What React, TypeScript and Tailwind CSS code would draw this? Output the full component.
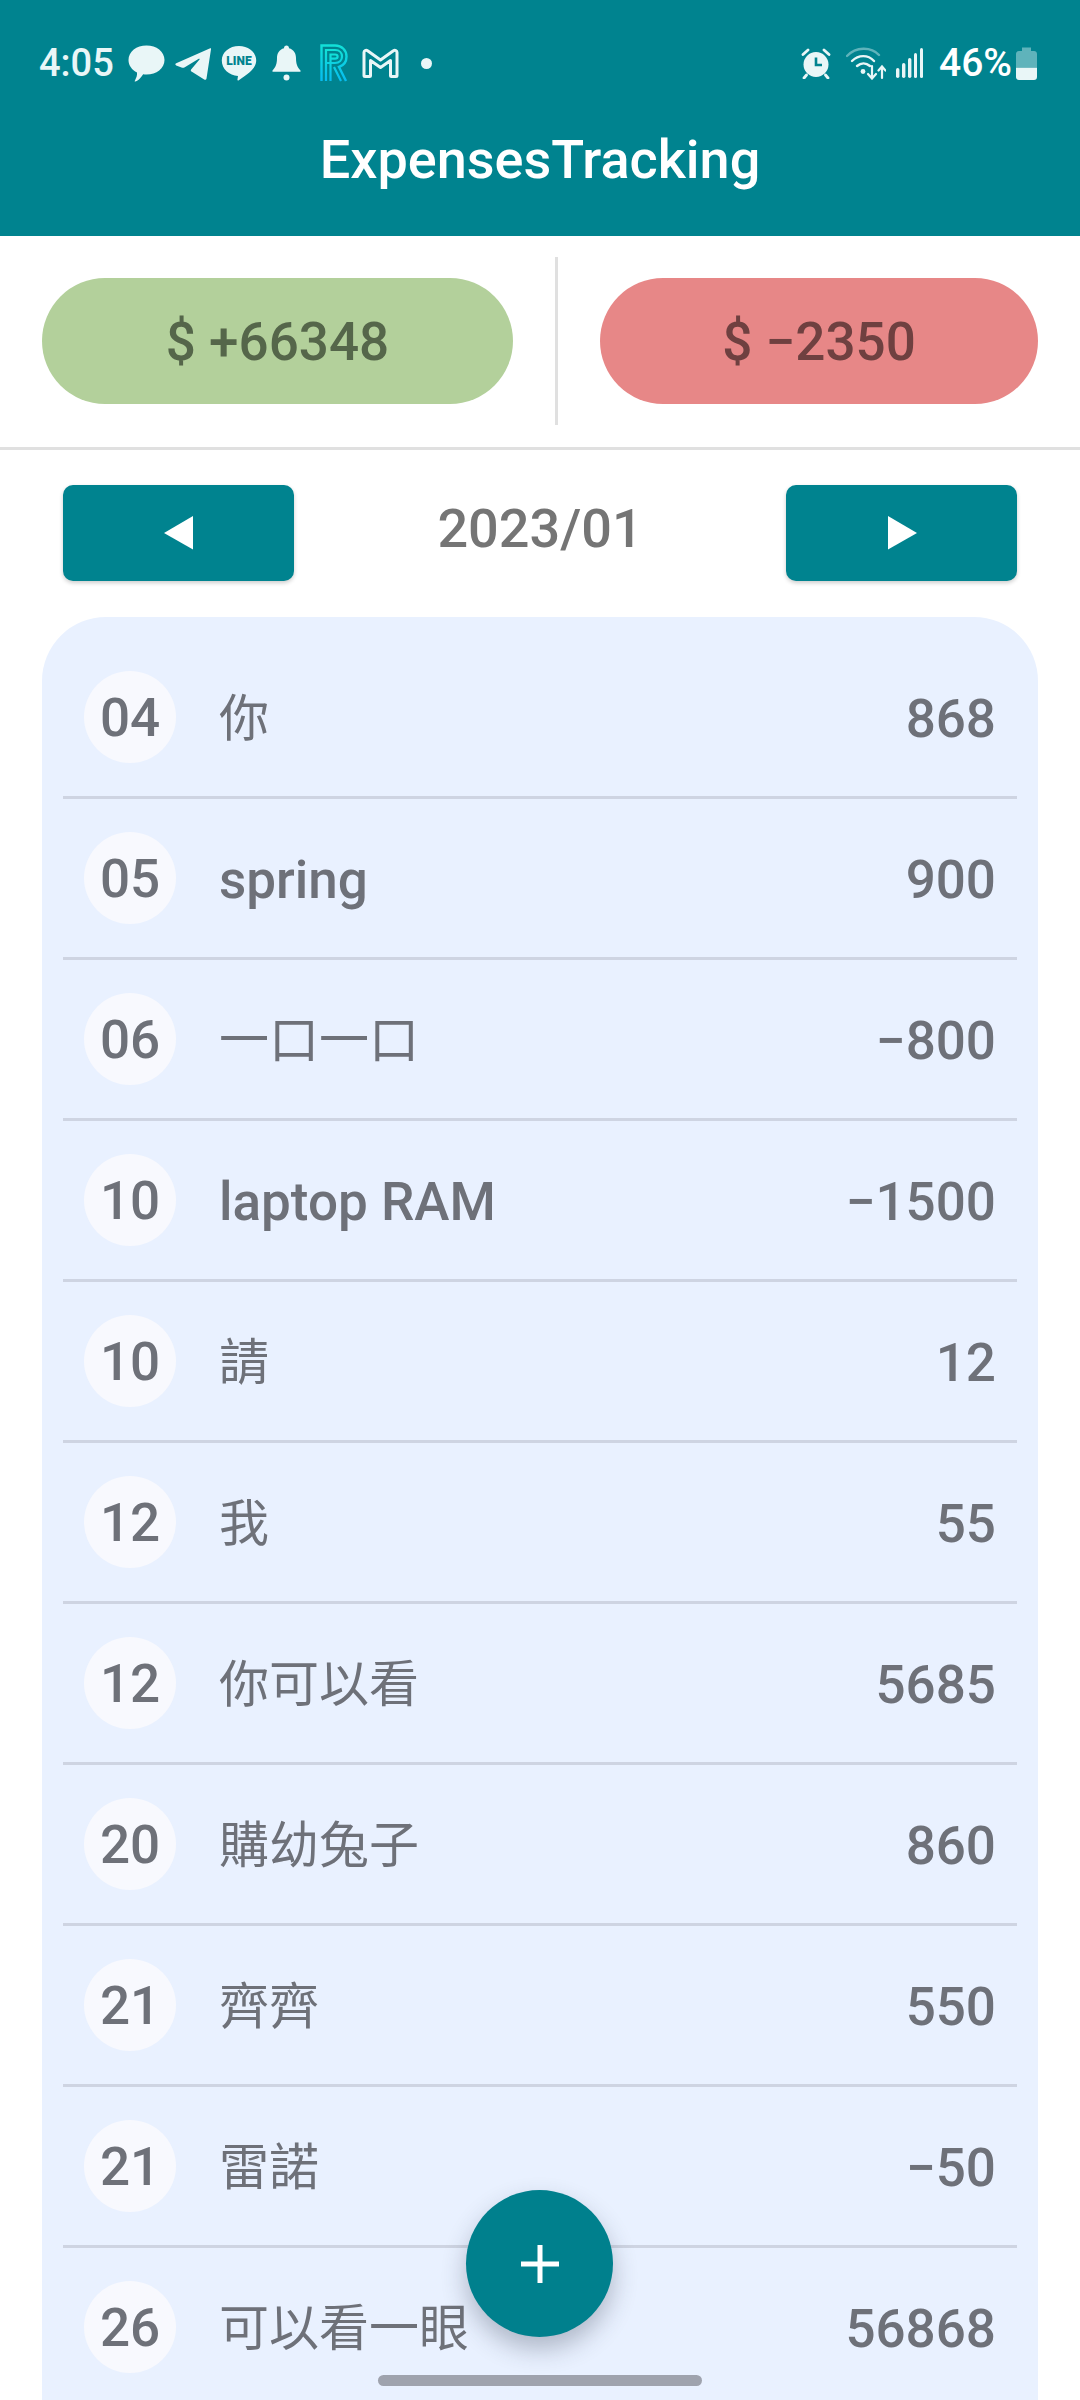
const rows = [
  { day: '04', name: '你', amount: '868' },
  { day: '05', name: 'spring', amount: '900', latin: true },
  { day: '06', name: '一口一口', amount: '−800' },
  { day: '10', name: 'laptop RAM', amount: '−1500', latin: true },
  { day: '10', name: '請', amount: '12' },
  { day: '12', name: '我', amount: '55' },
  { day: '12', name: '你可以看', amount: '5685' },
  { day: '20', name: '購幼兔子', amount: '860' },
  { day: '21', name: '齊齊', amount: '550' },
  { day: '21', name: '雷諾', amount: '−50' },
  { day: '26', name: '可以看一眼', amount: '56868' },
];

function StatusLeft() {
  return (
    <div className="flex items-center">
      <span className="text-[38px] leading-none font-medium text-[#e9f6f7] w-[89px]">4:05</span>
      <svg width="37" height="37" viewBox="0 0 37 37" fill="#e9f6f7">
        <path d="M18.5 0.5C28.5 0.5 36.5 6.6 36.5 15C36.5 23.4 28.5 29.5 18.5 29.5C17.4 29.5 16.3 29.4 15.2 29.2C13.5 32 9.5 36.5 7.2 36.5C6.4 36.5 6.6 35.8 7.2 34.9C8.2 33.2 9.3 30.6 9 27.6C4 25 0.5 20.4 0.5 15C0.5 6.6 8.5 0.5 18.5 0.5Z" />
      </svg>
      <svg className="ml-[10px]" width="36" height="33" viewBox="0 0 36 33" fill="#e9f6f7">
        <path d="M35.2 1.2C35.8 1 36.2 1.5 36 2.2L31.5 31.5C31.3 32.8 30.2 33.2 29.2 32.6L16.5 24.6C15.6 24 15.6 23 16.3 22.3L24.5 12.5C25 11.9 24.4 11.4 23.8 11.8L9.8 20.2C8.8 20.8 7.6 20.9 6.5 20.5L1.2 18.4C0 17.9 0 16.7 1.2 16.2Z" />
      </svg>
      <div className="relative ml-[10px] w-[36px] h-[36px]">
        <svg width="36" height="36" viewBox="0 0 36 36" fill="#e9f6f7">
          <path d="M18 1C27.7 1 35.2 7.2 35.2 15.6C35.2 24 26 29.6 17.8 35.2C16.8 35.9 16.2 35.4 16.5 34.2L17 31C8 30.6 0.8 24 0.8 15.6C0.8 7.2 8.3 1 18 1Z" />
        </svg>
        <span className="absolute left-0 right-0 top-[9px] text-center text-[12px] leading-[14px] font-black text-[#00838f]">LINE</span>
      </div>
      <svg className="ml-[15px]" width="29" height="36" viewBox="0 0 29 36" fill="#e9f6f7">
        <path d="M14.5 0.5C16 0.5 17 1.6 17 3.2C21.8 4.3 24 8.6 24 13C24 19 25.4 22.4 28.5 25.5V26.8H0.5V25.5C3.6 22.4 5 19 5 13C5 8.6 7.2 4.3 12 3.2C12 1.6 13 0.5 14.5 0.5Z" />
        <circle cx="14.5" cy="32.5" r="3" />
      </svg>
      <svg className="ml-[19px]" width="28" height="38" viewBox="0 0 28 38" fill="none">
        <defs>
          <linearGradient id="rlogo" x1="0" y1="0" x2="0" y2="1">
            <stop offset="0" stopColor="#12e0d8" />
            <stop offset="1" stopColor="#06bcf0" />
          </linearGradient>
        </defs>
        <path d="M1.5 37V1.5H15C22 1.5 26.5 6.5 26.5 12.5C26.5 18 23.5 21.5 19 23L26 37" stroke="url(#rlogo)" strokeWidth="2.4" />
        <path d="M6 37V6H15C19.5 6 22 9 22 12.5C22 16 19.5 19 15 19H6" stroke="url(#rlogo)" strokeWidth="2.2" />
        <path d="M10.5 37V10.5H15C16.8 10.5 17.6 11.6 17.6 12.5C17.6 13.6 16.8 14.6 15 14.6H10.5M14 23L21 37" stroke="url(#rlogo)" strokeWidth="2.2" />
      </svg>
      <svg className="ml-[14px]" width="37" height="30" viewBox="0 0 37 30" fill="none">
        <path d="M2 27.5V4.5C2 2.6 4 1.6 5.6 2.8L18.5 12L31.4 2.8C33 1.6 35 2.6 35 4.5V27.5C35 28 34.6 28.5 34 28.5H29.5C29 28.5 28.5 28 28.5 27.5V12.5L18.5 19.5L8.5 12.5V27.5C8.5 28 8 28.5 7.5 28.5H3C2.4 28.5 2 28 2 27.5Z" stroke="#e9f6f7" strokeWidth="3" strokeLinejoin="round" />
      </svg>
      <div className="ml-[22px] w-[11px] h-[11px] rounded-full bg-[#e9f6f7]" />
    </div>
  );
}

function StatusRight() {
  return (
    <div className="flex items-center">
      <svg width="30" height="31" viewBox="0 0 30 31" fill="none">
        <circle cx="15" cy="16.5" r="12.5" fill="#e9f6f7" />
        <path d="M15 9.5V17H21" stroke="#00838f" strokeWidth="2.6" />
        <path d="M2 6.5L7 2M28 6.5L23 2M5.5 27L3 30M24.5 27L27 30" stroke="#e9f6f7" strokeWidth="2.8" strokeLinecap="round" />
      </svg>
      <svg className="ml-[15px]" width="40" height="33" viewBox="0 0 40 33" fill="none" strokeLinecap="round">
        <path d="M1 9C10 -0.5 25 -0.5 33 8" stroke="#5fb3bb" strokeWidth="2.4" />
        <path d="M6 14C12.5 7.5 22 7.5 28 14" stroke="#e9f6f7" strokeWidth="2.4" />
        <path d="M11 19C15 15.5 20 15.5 24 19" stroke="#e9f6f7" strokeWidth="2.4" />
        <circle cx="17" cy="24.5" r="2.4" fill="#e9f6f7" />
        <path d="M26 19V31M22 27L26 31.5L30 27" stroke="#e9f6f7" strokeWidth="2.2" />
        <path d="M36 31V20M32.5 23.5L36 19.5L39.5 23.5" stroke="#e9f6f7" strokeWidth="2.2" />
      </svg>
      <svg className="ml-[10px]" width="27" height="30" viewBox="0 0 27 30" fill="#e9f6f7">
        <rect x="0" y="20" width="3.4" height="10" rx="1.7" />
        <rect x="6" y="15" width="3.4" height="15" rx="1.7" />
        <rect x="12" y="10" width="3.4" height="20" rx="1.7" />
        <rect x="18" y="5" width="3" height="25" rx="1.5" />
        <rect x="24" y="0" width="3" height="30" rx="1.5" />
      </svg>
      <span className="ml-[16px] text-[39px] leading-none font-medium text-white w-[77px]">46%</span>
      <svg width="21" height="33" viewBox="0 0 21 33">
        <path d="M6 0.5H15V4H18C19.8 4 21 5.2 21 7V20H0V7C0 5.2 1.2 4 3 4H6Z" fill="#5fb3bb" />
        <path d="M0 20.5H21V30C21 31.8 19.8 33 18 33H3C1.2 33 0 31.8 0 30Z" fill="#e9f6f7" />
      </svg>
    </div>
  );
}

export default function App() {
  return (
    <div className="relative w-[1080px] h-[2400px] overflow-hidden bg-white font-['Roboto','Noto_Sans_CJK_TC',sans-serif]">
      <header className="h-[236px] bg-[#00838f]">
        <div className="flex items-center justify-between h-[126px] pl-[39px] pr-[43px]">
          <StatusLeft />
          <StatusRight />
        </div>
        <h1 className="-mt-[2px] text-center text-[54px] leading-[72px] font-medium text-white">ExpensesTracking</h1>
      </header>

      <section className="flex items-center h-[214px] pb-[2px] border-b-[3px] border-[#e0e0e0]">
        <div className="w-[555px] pl-[42px] pr-[42px]">
          <div className="h-[126px] pt-[4px] rounded-full bg-[#b3d09b] flex items-center justify-center text-[53px] font-medium text-[#55664a]">$ +66348</div>
        </div>
        <div className="w-[3px] h-[168px] bg-[#e0e0e0]" />
        <div className="flex-1 pl-[42px] pr-[42px]">
          <div className="h-[126px] pt-[4px] rounded-full bg-[#e78787] flex items-center justify-center text-[53px] font-medium text-[#6f4040]">$ −2350</div>
        </div>
      </section>

      <nav className="flex items-center justify-between px-[63px] pt-[35px] pb-[36px]">
        <button className="w-[231px] h-[96px] rounded-[10px] bg-[#00838f] shadow-[0_2px_4px_rgba(0,0,0,0.2)] flex items-center justify-center">
          <svg width="30" height="34" viewBox="0 0 30 34" fill="white"><path d="M29 0V33.5L0 17Z" /></svg>
        </button>
        <span className="pb-[9px] text-[54px] font-medium text-[#757575]">2023/01</span>
        <button className="w-[231px] h-[96px] rounded-[10px] bg-[#00838f] shadow-[0_2px_4px_rgba(0,0,0,0.2)] flex items-center justify-center">
          <svg width="30" height="34" viewBox="0 0 30 34" fill="white"><path d="M1 0V33.5L30 17Z" /></svg>
        </button>
      </nav>

      <main className="mx-[42px] px-[21px] pt-[21px] rounded-t-[64px] bg-[#e9f1ff] h-[1800px]">
        {rows.map((row, i) => (
          <div key={i} className="flex items-center h-[161px] border-b-[3px] border-[#ced4e2] px-[21px] text-[#6e7179]">
            <div className="-mt-[1px] w-[92px] h-[92px] pt-[5px] rounded-full bg-[#f8f9fe] flex items-center justify-center text-[53px] font-medium">{row.day}</div>
            <div className={row.latin ? 'ml-[43px] flex-1 pt-[6px] text-[53px] font-medium' : 'ml-[43px] flex-1 pt-[4px] text-[50px] font-normal'}>{row.name}</div>
            <div className="pt-[6px] text-[53px] font-medium">{row.amount}</div>
          </div>
        ))}
      </main>

      <button className="absolute left-[466px] top-[2190px] w-[147px] h-[147px] rounded-full bg-[#00808d] shadow-[0_12px_24px_rgba(40,50,70,0.3)] flex items-center justify-center">
        <svg width="38" height="38" viewBox="0 0 38 38" fill="white"><path d="M16.5 0H21.5V16.5H38V21.5H21.5V38H16.5V21.5H0V16.5H16.5Z" /></svg>
      </button>
      <div className="absolute left-[378px] top-[2375px] w-[324px] h-[11px] rounded-full bg-[#9fa3ae]" />
    </div>
  );
}
